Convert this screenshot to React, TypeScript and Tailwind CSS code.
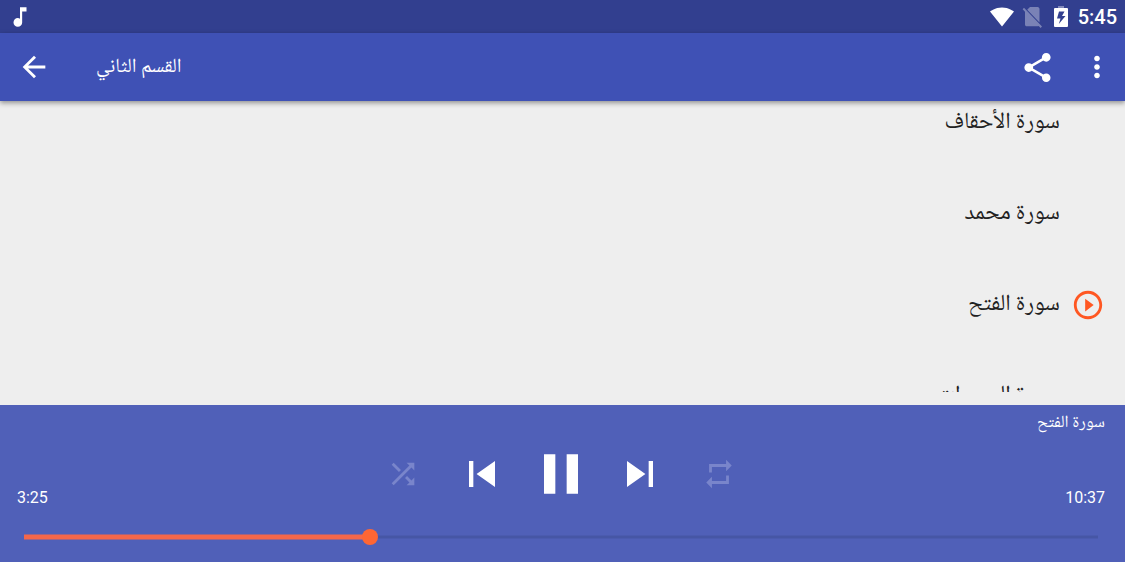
import { useState } from 'react'
import type { ReactNode } from 'react'

const ARABIC = "font-['Noto_Naskh_Arabic','Noto_Sans_Arabic','Noto_Sans','DejaVu_Sans',sans-serif]"

const tracks = ['سورة الأحقاف', 'سورة محمد', 'سورة الفتح', 'سورة الحجرات']

function Icon({ d, className }: { d: string; className: string }) {
  return (
    <svg viewBox="0 0 24 24" fill="currentColor" className={className} aria-hidden="true">
      <path d={d} />
    </svg>
  )
}

function StatusBar() {
  return (
    <div className="flex h-[33px] items-center bg-[#323f8f] pl-[7px] pr-2 text-white">
      <Icon
        className="size-[26px]"
        d="M12 3v10.55c-.59-.34-1.27-.55-2-.55-2.21 0-4 1.79-4 4s1.79 4 4 4 4-1.79 4-4V7h4V3h-6z"
      />
      <div className="ml-auto flex items-center">
        <svg viewBox="0 0 24 20" fill="currentColor" className="mr-2 h-5 w-6" aria-hidden="true">
          <path d="M12 19.5 24 4.6C23.500 4.200 19 .5 12 .5S.5 4.200 0 4.600z" />
        </svg>
        <svg viewBox="0 0 20 22" fill="currentColor" className="mr-3 h-[22px] w-5 opacity-35" aria-hidden="true">
          <path d="M17.500 3c0-1-.8-2-1.800-2H8L5.200 3.800 17.500 16.600zM2 1.800.6 3.200 3 5.700V18.500c0 1 .8 1.800 1.800 1.800h10.900c.4 0 .7-.1 1-.3l1.900 1.900 1.400-1.400z" />
        </svg>
        <svg viewBox="0 0 14 21" fill="currentColor" className="mr-2.5 h-[21px] w-3.5" aria-hidden="true">
          <path d="M4 0h6v2H4z" opacity=".4" />
          <path
            fillRule="evenodd"
            d="M1 2h12q1 0 1 1v17q0 1-1 1H1q-1 0-1-1V3q0-1 1-1zM5 5.500 3 12.500h3.500L4.800 18 11.500 10H8l2.500-4.500z"
          />
        </svg>
        <span className="font-[Roboto] text-xl leading-6 font-medium">5:45</span>
      </div>
    </div>
  )
}

function Toolbar() {
  return (
    <header className="relative z-10 flex h-[68px] items-center bg-[#3f51b5] pl-[17px] pr-[11px] text-white shadow-[0_2px_5px_rgba(0,0,0,0.4)]">
      <button type="button" aria-label="رجوع">
        <Icon
          className="size-[34px]"
          d="M20 11H7.830l5.590-5.590L12 4l-8 8 8 8 1.410-1.410L7.830 13H20v-2z"
        />
      </button>
      <h1 dir="rtl" className={`ml-[45px] pt-0.5 text-xl ${ARABIC}`}>
        القسم الثاني
      </h1>
      <button type="button" aria-label="مشاركة" className="ml-auto">
        <Icon
          className="size-[35px]"
          d="M18 16.080c-.76 0-1.440.3-1.960.77L8.910 12.700c.05-.23.09-.46.09-.7s-.04-.47-.09-.7l7.050-4.110c.54.5 1.250.81 2.040.81 1.660 0 3-1.340 3-3s-1.340-3-3-3-3 1.340-3 3c0 .24.04.47.09.7L8.040 9.810C7.500 9.310 6.790 9 6 9c-1.660 0-3 1.340-3 3s1.340 3 3 3c.79 0 1.500-.31 2.040-.81l7.120 4.160c-.05.21-.08.43-.08.65 0 1.610 1.310 2.920 2.920 2.920s2.920-1.310 2.920-2.920-1.310-2.920-2.920-2.920z"
        />
      </button>
      <button type="button" aria-label="المزيد" className="ml-[25px]">
        <Icon
          className="size-[34px]"
          d="M12 8c1.100 0 2-.9 2-2s-.9-2-2-2-2 .9-2 2 .9 2 2 2zm0 2c-1.100 0-2 .9-2 2s.9 2 2 2 2-.9 2-2-.9-2-2-2zm0 6c-1.100 0-2 .9-2 2s.9 2 2 2 2-.9 2-2-.9-2-2-2z"
        />
      </button>
    </header>
  )
}

function TrackList({ current }: { current: number }) {
  return (
    <main className="mb-[13px] min-h-0 flex-1 overflow-hidden">
      <ul dir="rtl" className="-mt-6">
        {tracks.map((name, i) => (
          <li key={name} className="flex h-[91px] items-center gap-[11px] pr-5">
            <span className="flex size-[34px] text-[#ff5722]">
              {i === current && (
                <Icon
                  className="size-[34px]"
                  d="M10 16.500l6-4.500-6-4.500v9zM12 2C6.480 2 2 6.480 2 12s4.480 10 10 10 10-4.480 10-10S17.520 2 12 2zm0 18c-4.410 0-8-3.590-8-8s3.590-8 8-8 8 3.590 8 8-3.590 8-8 8z"
                />
              )}
            </span>
            <span className={`text-[23px] leading-8 text-[#212121] ${ARABIC}`}>{name}</span>
          </li>
        ))}
      </ul>
    </main>
  )
}

function Control({ label, muted, children }: { label: string; muted?: boolean; children: ReactNode }) {
  return (
    <button
      type="button"
      aria-label={label}
      className={`flex w-[79px] items-center justify-center ${muted ? 'text-[#7985cb]' : 'text-white'}`}
    >
      {children}
    </button>
  )
}

function SeekBar({ duration }: { duration: number }) {
  const [position, setPosition] = useState(205)

  return (
    <div className="h-[52px] pt-[19px] pr-[19px] pl-4">
      <div className="relative flex h-4 items-center">
        <div className="absolute inset-x-2 top-1/2 h-[3px] -translate-y-1/2 bg-[#4656a5]" />
        <div className="absolute inset-x-2 top-1/2 h-[5px] -translate-y-1/2">
          <div className="h-full bg-[#f4674a]" style={{ width: `${(position / duration) * 100}%` }} />
        </div>
        <input
          type="range"
          aria-label="موضع التشغيل"
          min={0}
          max={duration}
          value={position}
          onChange={(e) => setPosition(Number(e.target.value))}
          className="relative h-4 w-full appearance-none bg-transparent [&::-webkit-slider-thumb]:size-4 [&::-webkit-slider-thumb]:appearance-none [&::-webkit-slider-thumb]:rounded-full [&::-webkit-slider-thumb]:bg-[#ff6634]"
        />
      </div>
    </div>
  )
}

function Player({ title }: { title: string }) {
  return (
    <footer className="bg-[#5060b8] pt-[5px] text-white">
      <p dir="rtl" className={`px-5 text-[17px] leading-7 ${ARABIC}`}>
        {title}
      </p>
      <div className="grid h-[72px] grid-cols-[1fr_auto_1fr] pl-[17px] pr-5 font-[Roboto]">
        <span className="self-end text-base leading-6">3:25</span>
        <div className="flex">
          <Control label="عشوائي" muted>
            <Icon
              className="size-[34px]"
              d="M10.590 9.170L5.410 4 4 5.410l5.170 5.170 1.420-1.410zM14.500 4l2.040 2.040L4 18.590 5.410 20 17.960 7.460 20 9.500V4h-5.500zm.33 9.410l-1.410 1.410 3.130 3.130L14.500 20H20v-5.500l-2.040 2.040-3.130-3.130z"
            />
          </Control>
          <Control label="السابق">
            <Icon className="size-[52px]" d="M6 6h2v12H6zm3.500 6l8.500 6V6z" />
          </Control>
          <Control label="إيقاف مؤقت">
            <Icon className="size-[68px]" d="M6 19h4V5H6v14zm8-14v14h4V5h-4z" />
          </Control>
          <Control label="التالي">
            <Icon className="size-[52px]" d="M6 18l8.500-6L6 6v12zM16 6v12h2V6h-2z" />
          </Control>
          <Control label="تكرار" muted>
            <Icon
              className="size-[34px]"
              d="M7 7h10v3l4-4-4-4v3H5v6h2V7zm10 10H7v-3l-4 4 4 4v-3h12v-6h-2v4z"
            />
          </Control>
        </div>
        <span className="self-end text-right text-base leading-6">10:37</span>
      </div>
      <SeekBar duration={637} />
    </footer>
  )
}

export default function App() {
  const current = 2

  return (
    <div className="flex h-screen flex-col bg-[#eeeeee]">
      <StatusBar />
      <Toolbar />
      <TrackList current={current} />
      <Player title={tracks[current]} />
    </div>
  )
}
